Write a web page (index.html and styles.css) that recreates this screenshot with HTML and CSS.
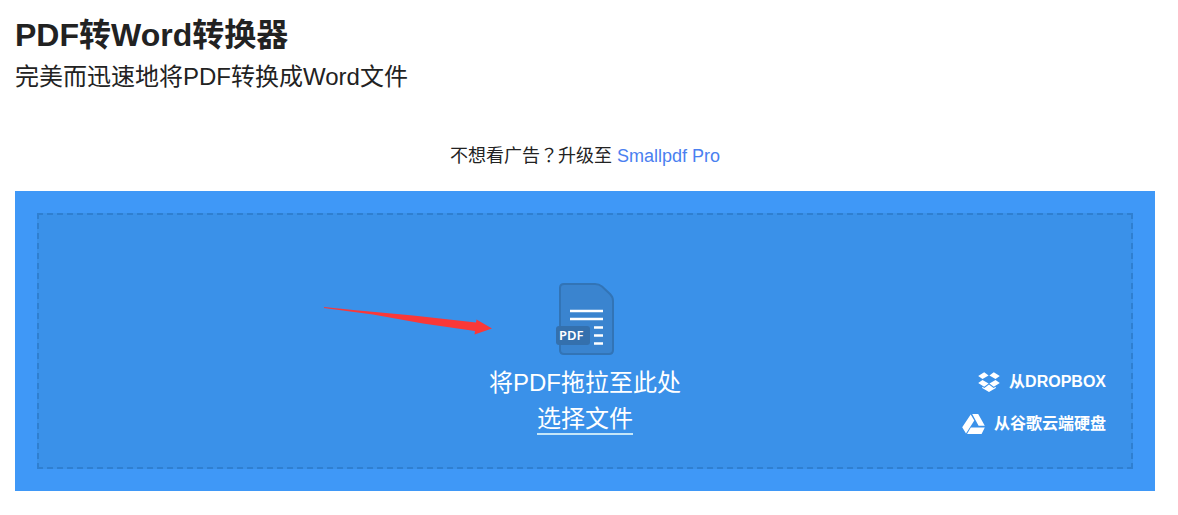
FILE: index.html
```html
<!DOCTYPE html>
<html lang="zh-CN">
<head>
<meta charset="utf-8">
<meta name="viewport" content="width=device-width, initial-scale=1">
<title>PDF转Word转换器</title>
<link rel="stylesheet" href="styles.css">
</head>
<body>
<main class="page">
  <header class="intro">
    <h1 class="title">PDF转Word转换器</h1>
    <h2 class="subtitle">完美而迅速地将PDF转换成Word文件</h2>
  </header>
  <p class="upgrade">不想看广告<span class="centered-mark" lang="zh-TW">？</span>升级至 <a class="upgrade-link" href="#pro">Smallpdf Pro</a></p>
  <section class="panel">
    <div class="dropzone">
      <svg class="arrow" width="170" height="30" viewBox="0 0 170 30" aria-hidden="true">
        <path d="M1 2L30 5L90 10.500L153 17.500L153.500 14.500L169 23.500L151.500 29.500L152 26L100 18.500L50 9.500L1 3Z" fill="#fa3838"/>
      </svg>
      <div class="chooser">
        <svg class="file-icon" width="60" height="72" viewBox="0 0 60 72" aria-hidden="true">
          <path d="M9 1H40Q44 1 47 3.500L55 11Q58 14 58 18V67Q58 71 54 71H9Q5 71 5 67V5Q5 1 9 1Z" fill="#3a84cf" stroke="#3274b6" stroke-width="2" stroke-linejoin="round"/>
          <path d="M15 28H48M15 36H48M39 44.500H48M39 52.500H48M39 60.500H48" stroke="#fff" stroke-width="2.500" fill="none"/>
          <rect x="1" y="43" width="34" height="19" rx="3" fill="#3470ad"/>
          <text class="file-tag" x="4" y="57">PDF</text>
        </svg>
        <p class="prompt">将PDF拖拉至此处</p>
        <button class="choose" type="button">选择文件</button>
      </div>
      <div class="sources">
        <button class="source" type="button">
          <svg width="22" height="20" viewBox="0 0 22 20" aria-hidden="true">
            <path d="M6.200 0.300L10.600 3.500L4.500 7L0.200 4ZM15.800 0.300L21.800 4L17.500 7L11.400 3.500ZM0.200 11L4.500 8L10.600 11.500L6.200 14.700ZM21.800 11L17.500 8L11.400 11.500L15.800 14.700ZM11 12.500L15.600 16L17.800 14.800V16L11 20L4.200 16V14.800L6.400 16Z" fill="#fff"/>
          </svg>
          从DROPBOX
        </button>
        <button class="source" type="button">
          <svg width="23" height="20" viewBox="0 0 23 20" aria-hidden="true">
            <path d="M8.700 0.400L12.300 6.500L4 19.600L0.200 13.200ZM10.200 0H16.200L22.800 11.800H16.600ZM8.800 13.500H22.800L19.600 20H5Z" fill="#fff"/>
          </svg>
          从谷歌云端硬盘
        </button>
      </div>
    </div>
  </section>
</main>
</body>
</html>
```
FILE: styles.css
```css
* {
  box-sizing: border-box;
}

body {
  margin: 0;
  background: #fff;
  color: #222;
  font-family: "Liberation Sans", "Noto Sans CJK SC", sans-serif;
}

.page {
  padding: 12px 23px 24px 15px;
}

.title,
.subtitle,
.upgrade,
.prompt {
  margin: 0;
}

.title {
  font-size: 32px;
  line-height: 46px;
}

.subtitle {
  font-size: 24px;
  font-weight: 400;
  line-height: 38px;
}

.upgrade {
  margin: 48px 0 23px;
  font-size: 18px;
  line-height: 24px;
  text-align: center;
}

.centered-mark {
  font-family: "Noto Sans CJK TC", sans-serif;
  line-height: 1;
}

.upgrade-link {
  color: #4a80f0;
  text-decoration: none;
}

.panel {
  padding: 22px;
  background: #3f98f7;
}

.dropzone {
  position: relative;
  display: grid;
  grid-template-columns: 1fr auto 1fr;
  padding: 68px 25px 31px;
  border: 2px dashed #2f7fd0;
  background: #3a91e9;
}

.arrow {
  position: absolute;
  top: 90px;
  right: calc(50% + 92px);
}

.chooser {
  grid-column: 2;
  display: flex;
  flex-direction: column;
  align-items: center;
  padding-bottom: 1px;
  color: #fff;
}

.file-tag {
  fill: #fff;
  font-family: "Noto Sans", sans-serif;
  font-size: 13px;
  font-weight: 600;
}

.prompt {
  margin-top: 10px;
  font-size: 24px;
  line-height: 36px;
}

.choose,
.source {
  padding: 0;
  border: 0;
  background: none;
  color: #fff;
  font-family: inherit;
  cursor: pointer;
}

.choose {
  padding-top: 4px;
  border-bottom: 2px solid #c4e6f8;
  font-size: 24px;
  line-height: 28px;
}

.sources {
  display: flex;
  flex-direction: column;
  align-items: flex-end;
  justify-content: flex-end;
  gap: 18px;
}

.source {
  display: flex;
  align-items: center;
  gap: 9px;
  font-size: 16px;
  font-weight: 700;
  line-height: 24px;
}
```
